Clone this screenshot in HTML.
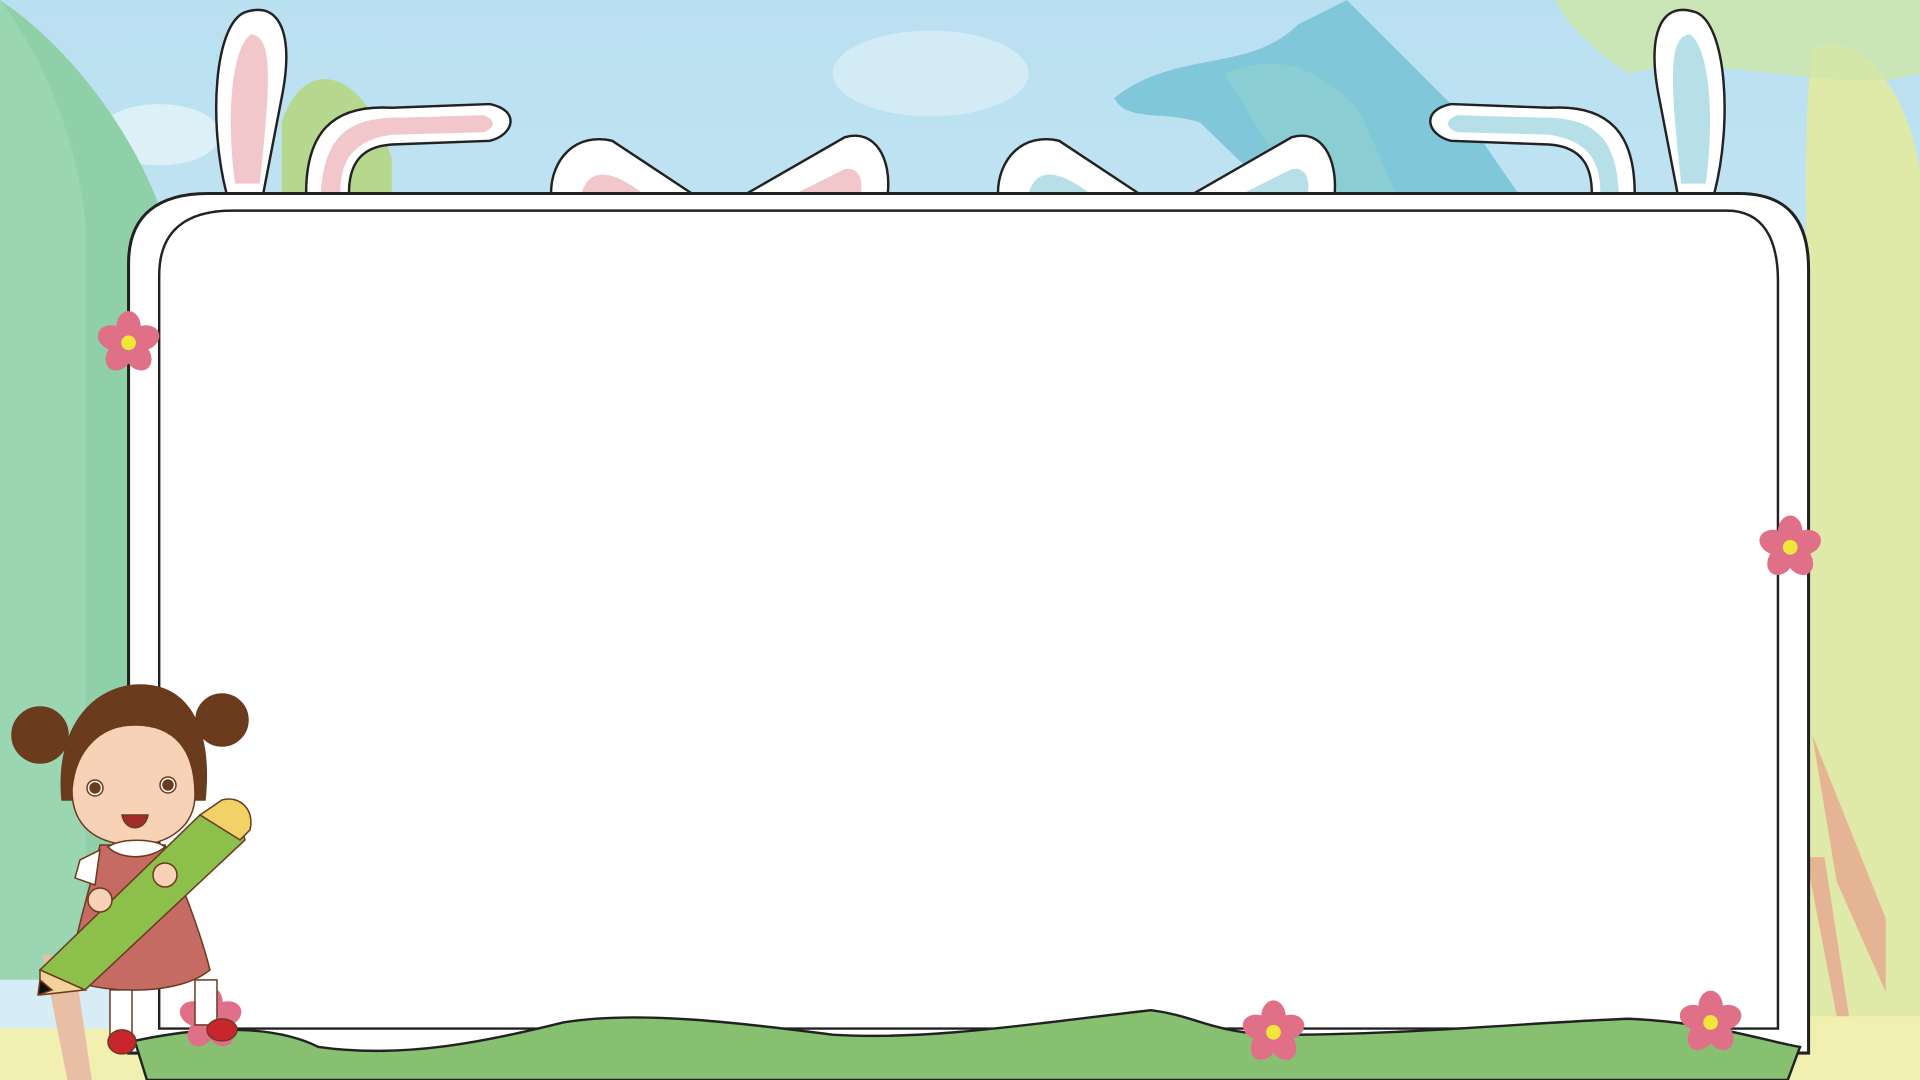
<!DOCTYPE html>
<html><head><meta charset="utf-8"><style>html,body{margin:0;padding:0;width:1920px;height:1080px;overflow:hidden}svg{display:block}</style></head><body>
<svg width="1920" height="1080" viewBox="0 0 1568 882" preserveAspectRatio="none" xmlns="http://www.w3.org/2000/svg">
<defs>
<linearGradient id="sky" x1="0" y1="0" x2="0" y2="1"><stop offset="0" stop-color="#b9e0f1"/><stop offset="1" stop-color="#d8eef6"/></linearGradient>
<g id="fl"><g fill="#e07088"><ellipse cx="0" cy="-13" rx="10" ry="13"/><ellipse cx="0" cy="-13" rx="10" ry="13" transform="rotate(72)"/><ellipse cx="0" cy="-13" rx="10" ry="13" transform="rotate(144)"/><ellipse cx="0" cy="-13" rx="10" ry="13" transform="rotate(216)"/><ellipse cx="0" cy="-13" rx="10" ry="13" transform="rotate(288)"/><circle r="10"/></g><circle r="6" fill="#f3e63a"/></g>
</defs>
<rect width="1568" height="882" fill="url(#sky)"/>
<ellipse cx="760" cy="60" rx="80" ry="35" fill="#d2ebf5"/>
<ellipse cx="130" cy="110" rx="50" ry="25" fill="#dcf0f7"/>
<path d="M910 80 C960 40 1020 60 1060 20 L1100 0 L1140 40 L1200 100 L1240 158 L1040 158 L980 100 C950 90 920 100 910 80Z" fill="#7fc7d9"/>
<path d="M1000 60 C1050 40 1080 60 1110 90 L1140 158 L1060 158 Z" fill="#8dd0d2" opacity=".8"/>
<path d="M0 0 C60 40 120 120 140 200 L140 800 L0 800Z" fill="#8fd0a9"/>
<path d="M0 0 C30 40 60 100 70 180 L70 800 L0 800Z" fill="#9bd6b2"/>
<path d="M230 100 C250 40 300 60 320 130 L320 158 L230 158Z" fill="#b6d88e"/>
<path d="M1480 40 C1520 20 1560 80 1568 140 L1568 882 L1470 882 L1470 300 C1480 200 1470 120 1480 40Z" fill="#dfe9a8"/>
<path d="M1270 0 L1568 0 L1568 60 C1500 80 1400 40 1330 60 C1300 40 1280 20 1270 0Z" fill="#cfe7a8" opacity=".8"/>
<path d="M1480 600 L1540 750 L1540 810 L1500 720Z" fill="#e4b494"/>
<path d="M1475 700 L1500 830 L1510 830 L1490 700Z" fill="#e4b494"/>
<rect x="0" y="840" width="160" height="42" fill="#f2f0b0"/>
<rect x="1460" y="830" width="108" height="52" fill="#f2f0b0"/>
<path d="M35 780 L55 882 L75 882 L60 780Z" fill="#e8bfa4"/>
<g stroke="#222" stroke-width="2">
<path d="M185 158 C170 100 175 20 200 10 C230 0 240 30 230 80 L215 158Z" fill="#fff"/>
<path d="M192 150 C185 100 188 40 205 28 C222 30 222 60 212 150Z" fill="#f1c7cc" stroke="none"/>
<path d="M250 158 C250 110 270 85 320 88 L400 85 C425 90 420 110 400 115 L320 118 C290 120 285 140 285 158Z" fill="#fff"/>
<path d="M262 158 C265 110 285 95 330 96 L395 94 C405 98 405 104 395 108 L320 110 C285 115 278 135 278 158Z" fill="#f1c7cc" stroke="none"/>
<path d="M450 158 C450 130 470 108 500 115 L565 158Z" fill="#fff"/>
<path d="M475 158 C480 140 495 135 525 158Z" fill="#f1c7cc" stroke="none"/>
<path d="M610 158 L690 112 C715 105 728 130 725 158Z" fill="#fff"/>
<path d="M650 158 L690 138 C702 136 705 148 703 158Z" fill="#f1c7cc" stroke="none"/>
<path d="M815 158 C815 130 835 108 865 115 L930 158Z" fill="#fff"/>
<path d="M840 158 C845 140 860 135 890 158Z" fill="#b7dfe8" stroke="none"/>
<path d="M975 158 L1055 112 C1080 105 1092 130 1090 158Z" fill="#fff"/>
<path d="M1015 158 L1055 138 C1067 136 1070 148 1068 158Z" fill="#b7dfe8" stroke="none"/>
<path d="M1335 158 C1335 110 1315 85 1265 88 L1185 85 C1160 90 1165 110 1185 115 L1265 118 C1295 120 1300 140 1300 158Z" fill="#fff"/>
<path d="M1322 158 C1320 110 1300 95 1255 96 L1190 94 C1180 98 1180 104 1190 108 L1265 110 C1300 115 1307 135 1307 158Z" fill="#b7dfe8" stroke="none"/>
<path d="M1400 158 C1415 100 1410 20 1385 10 C1355 0 1345 30 1355 80 L1370 158Z" fill="#fff"/>
<path d="M1393 150 C1400 100 1397 40 1380 28 C1363 30 1363 60 1373 150Z" fill="#b7dfe8" stroke="none"/>
</g>
<path d="M105 215 C105 175 130 158 170 158 L1420 158 C1460 158 1477 180 1477 220 L1477 860 L105 860Z" fill="#fff" stroke="#222" stroke-width="2.5"/>
<path d="M130 225 C130 190 150 172 190 172 L1410 172 C1440 172 1452 195 1452 230 L1452 840 L130 840Z" fill="none" stroke="#222" stroke-width="2"/>
<path d="M110 850 C180 835 230 840 260 855 C330 865 400 850 460 835 C520 825 600 835 680 845 C760 850 850 835 940 825 C980 830 990 845 1050 845 C1150 845 1250 835 1330 832 C1400 835 1440 850 1470 855 L1460 882 L120 882Z" fill="#88c072" stroke="#222" stroke-width="2"/>
<use href="#fl" x="105" y="280"/>
<use href="#fl" x="1462" y="447"/>
<use href="#fl" x="1040" y="843"/>
<use href="#fl" x="1397" y="835"/>
<use href="#fl" x="172" y="832"/>
<g transform="translate(0,530.8) scale(0.8166)" stroke="#6b3a1f" stroke-width="1.5">
<circle cx="40" cy="85" r="28" fill="#6a3b1d"/>
<circle cx="222" cy="70" r="26" fill="#6a3b1d"/>
<path d="M62 150 C55 70 100 35 140 35 C190 35 212 80 205 150 Z" fill="#6a3b1d"/>
<path d="M72 140 C75 100 100 75 135 75 C175 75 195 100 195 145 C195 175 170 195 135 195 C95 195 72 175 72 140Z" fill="#f8d2b6"/>
<circle cx="95" cy="138" r="8" fill="#fff"/><circle cx="95" cy="138" r="5" fill="#6a3b1d"/>
<circle cx="168" cy="135" r="8" fill="#fff"/><circle cx="168" cy="135" r="5" fill="#6a3b1d"/>
<path d="M122 165 C125 182 145 182 148 165Z" fill="#a32b2b"/>
<path d="M100 195 C90 240 70 300 70 330 C110 345 180 345 210 320 C200 280 180 230 165 195Z" fill="#c66a64"/>
<path d="M80 210 L100 200 L95 235 L75 228Z" fill="#fff"/>
<path d="M108 197 C120 210 150 210 165 197 C155 188 120 188 108 197Z" fill="#fff"/>
<rect x="110" y="340" width="22" height="45" fill="#fff"/><rect x="195" y="330" width="22" height="45" fill="#fff"/>
<ellipse cx="122" cy="392" rx="14" ry="12" fill="#c8262c"/><ellipse cx="222" cy="380" rx="15" ry="11" fill="#c8262c"/>
<path d="M40 320 L200 165 C215 155 240 170 245 190 L85 340Z" fill="#8cc04a"/>
<path d="M200 165 L222 150 C240 145 255 160 250 180 L240 190Z" fill="#f0d266"/>
<path d="M40 320 L85 340 L40 345Z" fill="#f3d39a"/><path d="M40 330 L52 340 L38 345Z" fill="#111"/>
<circle cx="100" cy="250" r="12" fill="#f8d2b6"/><circle cx="165" cy="225" r="12" fill="#f8d2b6"/>
</g>
</svg>
</body></html>
